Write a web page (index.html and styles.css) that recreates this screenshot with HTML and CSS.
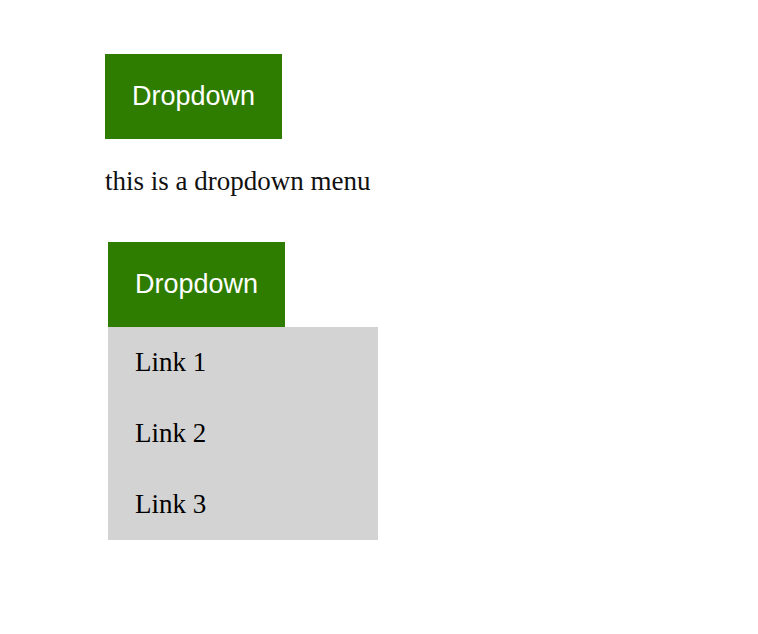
FILE: index.html
```html
<!DOCTYPE html>
<html>
<head>
<meta charset="utf-8">
<link rel="stylesheet" href="styles.css">
</head>
<body>
<div class="page">
  <button class="btn">Dropdown</button>
  <p class="note">this is a dropdown menu</p>
  <div class="dropdown">
    <button class="btn">Dropdown</button>
    <div class="menu">
      <span class="link">Link 1</span>
      <span class="link">Link 2</span>
      <span class="link">Link 3</span>
    </div>
  </div>
</div>
</body>
</html>
```
FILE: styles.css
```css
html, body {
  margin: 0;
  background: #ffffff;
}
.page {
  padding: 54px 0 0 105px;
}
.btn {
  display: block;
  width: fit-content;
  border: none;
  margin: 0;
  background: #2e7d00;
  color: #ffffff;
  font-family: "Liberation Sans", Arial, sans-serif;
  font-size: 27px;
  line-height: 31px;
  padding: 27px 27px;
  cursor: pointer;
}
.note {
  margin: 27px 0 45px 0;
  font-family: "Liberation Serif", "Times New Roman", serif;
  font-size: 27px;
  line-height: 31px;
  color: #111;
}
.dropdown {
  display: flex;
  flex-direction: column;
  align-items: flex-start;
  margin-left: 3px;
}
.menu {
  width: 270px;
  background: #d3d3d3;
}
.link {
  display: block;
  padding: 20px 27px;
  font-family: "Liberation Serif", "Times New Roman", serif;
  font-size: 27px;
  line-height: 31px;
  color: #000;
}
```
